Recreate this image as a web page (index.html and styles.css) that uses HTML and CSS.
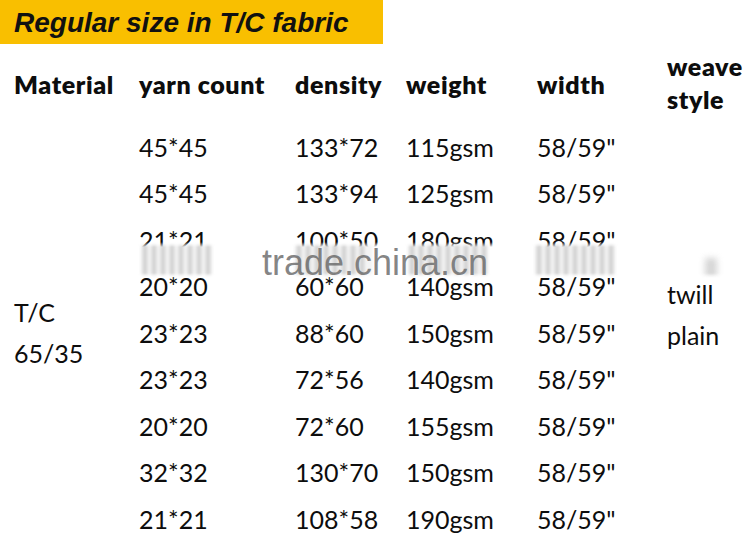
FILE: index.html
```html
<!DOCTYPE html>
<html>
<head>
<meta charset="utf-8">
<link rel="stylesheet" href="styles.css">
</head>
<body>
<div class="page">
  <div class="banner"><span class="banner-text">Regular size in T/C fabric</span></div>
  <div class="table">
    <div class="mat"><span>T/C</span><span>65/35</span></div>
    <div class="weave"><span>twill</span><span>plain</span></div>

    <div class="th">Material</div>
    <div class="th">yarn count</div>
    <div class="th">density</div>
    <div class="th">weight</div>
    <div class="th">width</div>
    <div class="th th-two"><span>weave</span><span>style</span></div>

    <div class="td">45*45</div><div class="td">133*72</div><div class="td">115gsm</div><div class="td">58/59"</div>
    <div class="td">45*45</div><div class="td">133*94</div><div class="td">125gsm</div><div class="td">58/59"</div>
    <div class="td">21*21</div><div class="td">100*50</div><div class="td">180gsm</div><div class="td">58/59"</div>
    <div class="td">20*20</div><div class="td">60*60</div><div class="td">140gsm</div><div class="td">58/59"</div>
    <div class="td">23*23</div><div class="td">88*60</div><div class="td">150gsm</div><div class="td">58/59"</div>
    <div class="td">23*23</div><div class="td">72*56</div><div class="td">140gsm</div><div class="td">58/59"</div>
    <div class="td">20*20</div><div class="td">72*60</div><div class="td">155gsm</div><div class="td">58/59"</div>
    <div class="td">32*32</div><div class="td">130*70</div><div class="td">150gsm</div><div class="td">58/59"</div>
    <div class="td">21*21</div><div class="td">108*58</div><div class="td">190gsm</div><div class="td">58/59"</div>
  </div>

  <div class="strip" aria-hidden="true">
    <span class="smear s1"></span>
    <span class="smear s2"></span>
    <span class="smear s3"></span>
    <span class="smear s4"></span>
    <span class="blob"></span>
  </div>
  <div class="watermark">trade.china.cn</div>
</div>
</body>
</html>
```

FILE: styles.css
```css
html, body {
  margin: 0;
  padding: 0;
  background: #ffffff;
}

.page {
  position: relative;
  width: 750px;
  height: 548px;
  overflow: hidden;
  font-family: Lato, "Open Sans", sans-serif;
  color: #0d0d0d;
}

.banner {
  width: 383px;
  height: 44px;
  background: #f9bf00;
  display: flex;
  align-items: center;
  padding-left: 14px;
  box-sizing: border-box;
}

.banner-text {
  font-family: "Liberation Sans", Arial, sans-serif;
  font-weight: bold;
  font-style: italic;
  font-size: 28px;
  line-height: 1;
  color: #111111;
  padding-top: 2px;
}

.table {
  display: grid;
  grid-template-columns: 125px 156px 111px 131px 130px 1fr;
  grid-template-rows: 80px repeat(9, 46.5px);
  padding-left: 14px;
  font-size: 25px;
}

.th {
  font-weight: 800;
  display: flex;
  align-items: center;
  line-height: 1;
  letter-spacing: 0.6px;
}

.th-two {
  flex-direction: column;
  align-items: flex-start;
  justify-content: center;
  line-height: 33px;
  padding-bottom: 2px;
}

.td {
  display: flex;
  align-items: center;
  line-height: 1;
}

.mat {
  grid-column: 1;
  grid-row: 2 / span 9;
  display: flex;
  flex-direction: column;
  justify-content: center;
  line-height: 41px;
}

.weave {
  grid-column: 6;
  grid-row: 2 / span 9;
  display: flex;
  flex-direction: column;
  justify-content: center;
  line-height: 41px;
  padding-bottom: 37px;
}

.strip {
  position: absolute;
  left: 130px;
  top: 242px;
  width: 610px;
  height: 36px;
  background: #ffffff;
  -webkit-mask-image: linear-gradient(to bottom, transparent 0, #000 5px, #000 31px, transparent 36px);
  mask-image: linear-gradient(to bottom, transparent 0, #000 5px, #000 31px, transparent 36px);
}

.smear {
  position: absolute;
  top: 2px;
  height: 32px;
  background: repeating-linear-gradient(to right, #8a8a8a 0, #8a8a8a 4px, transparent 4px, transparent 9px);
  opacity: 0.55;
  filter: blur(2px);
}

.s1 { left: 13px; width: 70px; }
.s2 { left: 167px; width: 73px; }
.s3 { left: 280px; width: 80px; }
.s4 { left: 407px; width: 78px; }

.blob {
  position: absolute;
  left: 575px;
  top: 16px;
  width: 12px;
  height: 20px;
  background: #bbbbbb;
  filter: blur(3px);
  opacity: 0.6;
}

.watermark {
  position: absolute;
  left: 262px;
  top: 243px;
  font-family: "Liberation Sans", Arial, sans-serif;
  font-size: 36px;
  line-height: 40px;
  color: rgba(100, 100, 100, 0.78);
  white-space: nowrap;
}
```
